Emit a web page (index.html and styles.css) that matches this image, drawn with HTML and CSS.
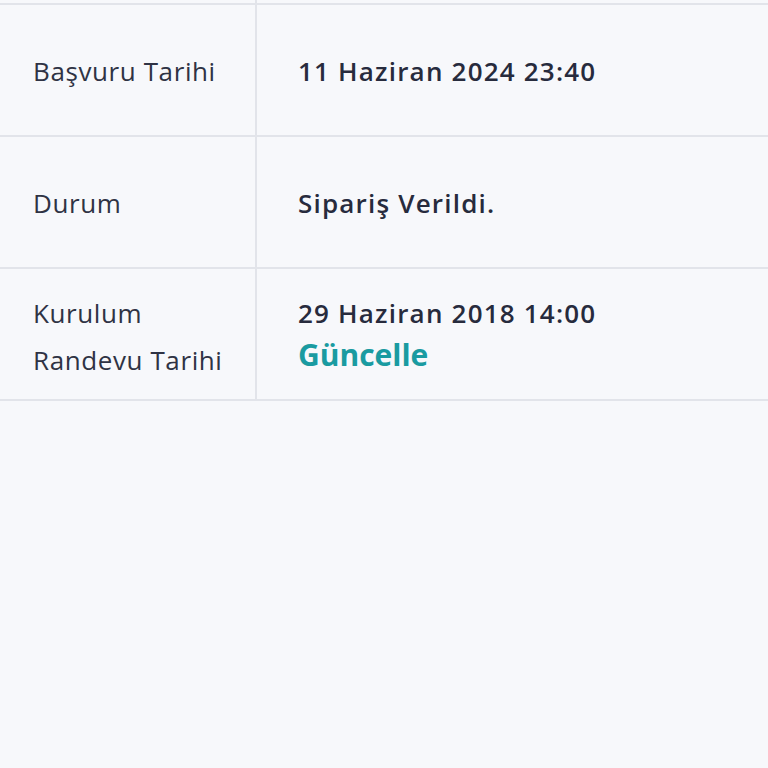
FILE: index.html
```html
<!DOCTYPE html>
<html lang="tr">
<head>
    <meta charset="UTF-8">
    <meta name="viewport" content="width=device-width, initial-scale=1.0">
    <title>Sipariş Detayı</title>
    <link rel="stylesheet" href="styles.css">
</head>
<body>
    <div class="details">
        <div class="row row-cut">
            <div class="label"></div>
            <div class="value"></div>
        </div>
        <div class="row">
            <div class="label">Başvuru Tarihi</div>
            <div class="value"><b>11 Haziran 2024 23:40</b></div>
        </div>
        <div class="row">
            <div class="label">Durum</div>
            <div class="value"><b>Sipariş Verildi.</b></div>
        </div>
        <div class="row">
            <div class="label two-line">Kurulum<br>Randevu Tarihi</div>
            <div class="value">
                <b>29 Haziran 2018 14:00</b>
                <a href="#" class="update">Güncelle</a>
            </div>
        </div>
    </div>
</body>
</html>
```

FILE: styles.css
```css
body {
    margin: 0;
    background-color: #f7f8fb;
    font-family: "Open Sans", "Noto Sans", sans-serif;
    color: #272b3d;
}
.details {
    display: flex;
    flex-direction: column;
}
.row {
    display: flex;
    height: 130px;
    border-bottom: 2px solid #e2e4ea;
}
.row-cut {
    height: 3px;
}
.label {
    width: 257px;
    padding-left: 33px;
    padding-top: 2px;
    box-sizing: border-box;
    border-right: 2px solid #e2e4ea;
    display: flex;
    align-items: center;
    font-size: 26px;
    letter-spacing: 0.6px;
    color: #2f3344;
}
.two-line {
    line-height: 47px;
    padding-top: 6px;
}
.value {
    flex: 1;
    padding-left: 41px;
    padding-top: 2px;
    display: flex;
    flex-direction: column;
    justify-content: center;
    font-size: 26px;
    letter-spacing: 1.2px;
}
.value b {
    font-weight: 600;
}
.update {
    margin-top: 3px;
    font-size: 30px;
    font-weight: 700;
    letter-spacing: 0;
    color: #1a9ba1;
    text-decoration: none;
}
```
